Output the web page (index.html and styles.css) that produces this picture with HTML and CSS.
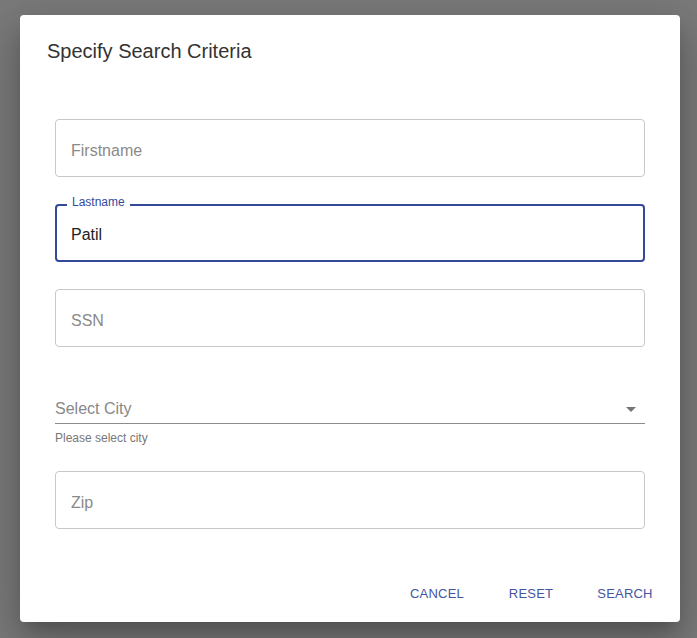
FILE: index.html
```html
<!DOCTYPE html>
<html>
<head>
<meta charset="utf-8">
<link rel="stylesheet" href="styles.css">
</head>
<body>
<div class="dialog">
  <h2 class="title">Specify Search Criteria</h2>
  <div class="content">
    <div class="field"><span class="placeholder">Firstname</span></div>
    <div class="field focused"><span class="float-label">Lastname</span><span class="value">Patil</span></div>
    <div class="field"><span class="placeholder">SSN</span></div>
    <div class="select-group">
      <div class="select">
        <span class="select-text">Select City</span>
        <svg class="arrow" width="24" height="24" viewBox="0 0 24 24"><path d="M7 10l5 5 5-5z" fill="#757575"/></svg>
      </div>
      <div class="helper">Please select city</div>
    </div>
    <div class="field"><span class="placeholder">Zip</span></div>
  </div>
  <div class="actions">
    <button class="btn">CANCEL</button>
    <button class="btn">RESET</button>
    <button class="btn">SEARCH</button>
  </div>
</div>
</body>
</html>
```
FILE: styles.css
```css
html, body {
  margin: 0;
  padding: 0;
}
body {
  width: 697px;
  height: 638px;
  background: #7a7a7a;
  font-family: "Liberation Sans", Arial, sans-serif;
  overflow: hidden;
}
.dialog {
  position: relative;
  margin: 15px 0 0 20px;
  width: 660px;
  height: 607px;
  background: #fff;
  border-radius: 4px;
  box-shadow: 0 11px 15px -7px rgba(0,0,0,.2), 0 24px 38px 3px rgba(0,0,0,.14), 0 9px 46px 8px rgba(0,0,0,.12);
  display: flex;
  flex-direction: column;
  box-sizing: border-box;
}
.title {
  margin: 0;
  padding: 24px 24px 0 27px;
  font-size: 20px;
  line-height: 24px;
  font-weight: 400;
  color: #333;
}
.content {
  padding: 56px 35px 0 35px;
  display: flex;
  flex-direction: column;
}
.field {
  position: relative;
  height: 58px;
  border: 1px solid #c8c8c8;
  border-radius: 4px;
  box-sizing: border-box;
  display: flex;
  align-items: center;
  padding-left: 15px;
  padding-top: 6px;
  margin-bottom: 27px;
}
.field.focused {
  border: 2px solid #34499a;
  padding-left: 14px;
  padding-top: 4px;
}
.placeholder {
  font-size: 16px;
  color: #8a8a8a;
}
.value {
  font-size: 16px;
  color: #222;
}
.float-label {
  position: absolute;
  left: 10px;
  top: -11px;
  padding: 0 5px;
  background: #fff;
  font-size: 12px;
  line-height: 14px;
  color: #34499a;
}
.select-group {
  padding-top: 21px;
  margin-bottom: 23px;
}
.select {
  height: 28px;
  border-bottom: 1px solid #8c8c8c;
  display: flex;
  align-items: center;
  justify-content: space-between;
}
.select-text {
  font-size: 16px;
  color: #888;
}
.arrow {
  margin-right: 2px;
}
.helper {
  margin-top: 4px;
  font-size: 12px;
  line-height: 20px;
  color: #777;
}
.actions {
  margin-top: auto;
  display: flex;
  justify-content: flex-end;
  gap: 6px;
  padding: 0 11px 11px 0;
}
.btn {
  width: 88px;
  height: 36px;
  background: none;
  border: none;
  padding: 0;
  font-family: "Liberation Sans", Arial, sans-serif;
  font-size: 13px;
  letter-spacing: 0.2px;
  color: #44559f;
  text-align: center;
}
```
